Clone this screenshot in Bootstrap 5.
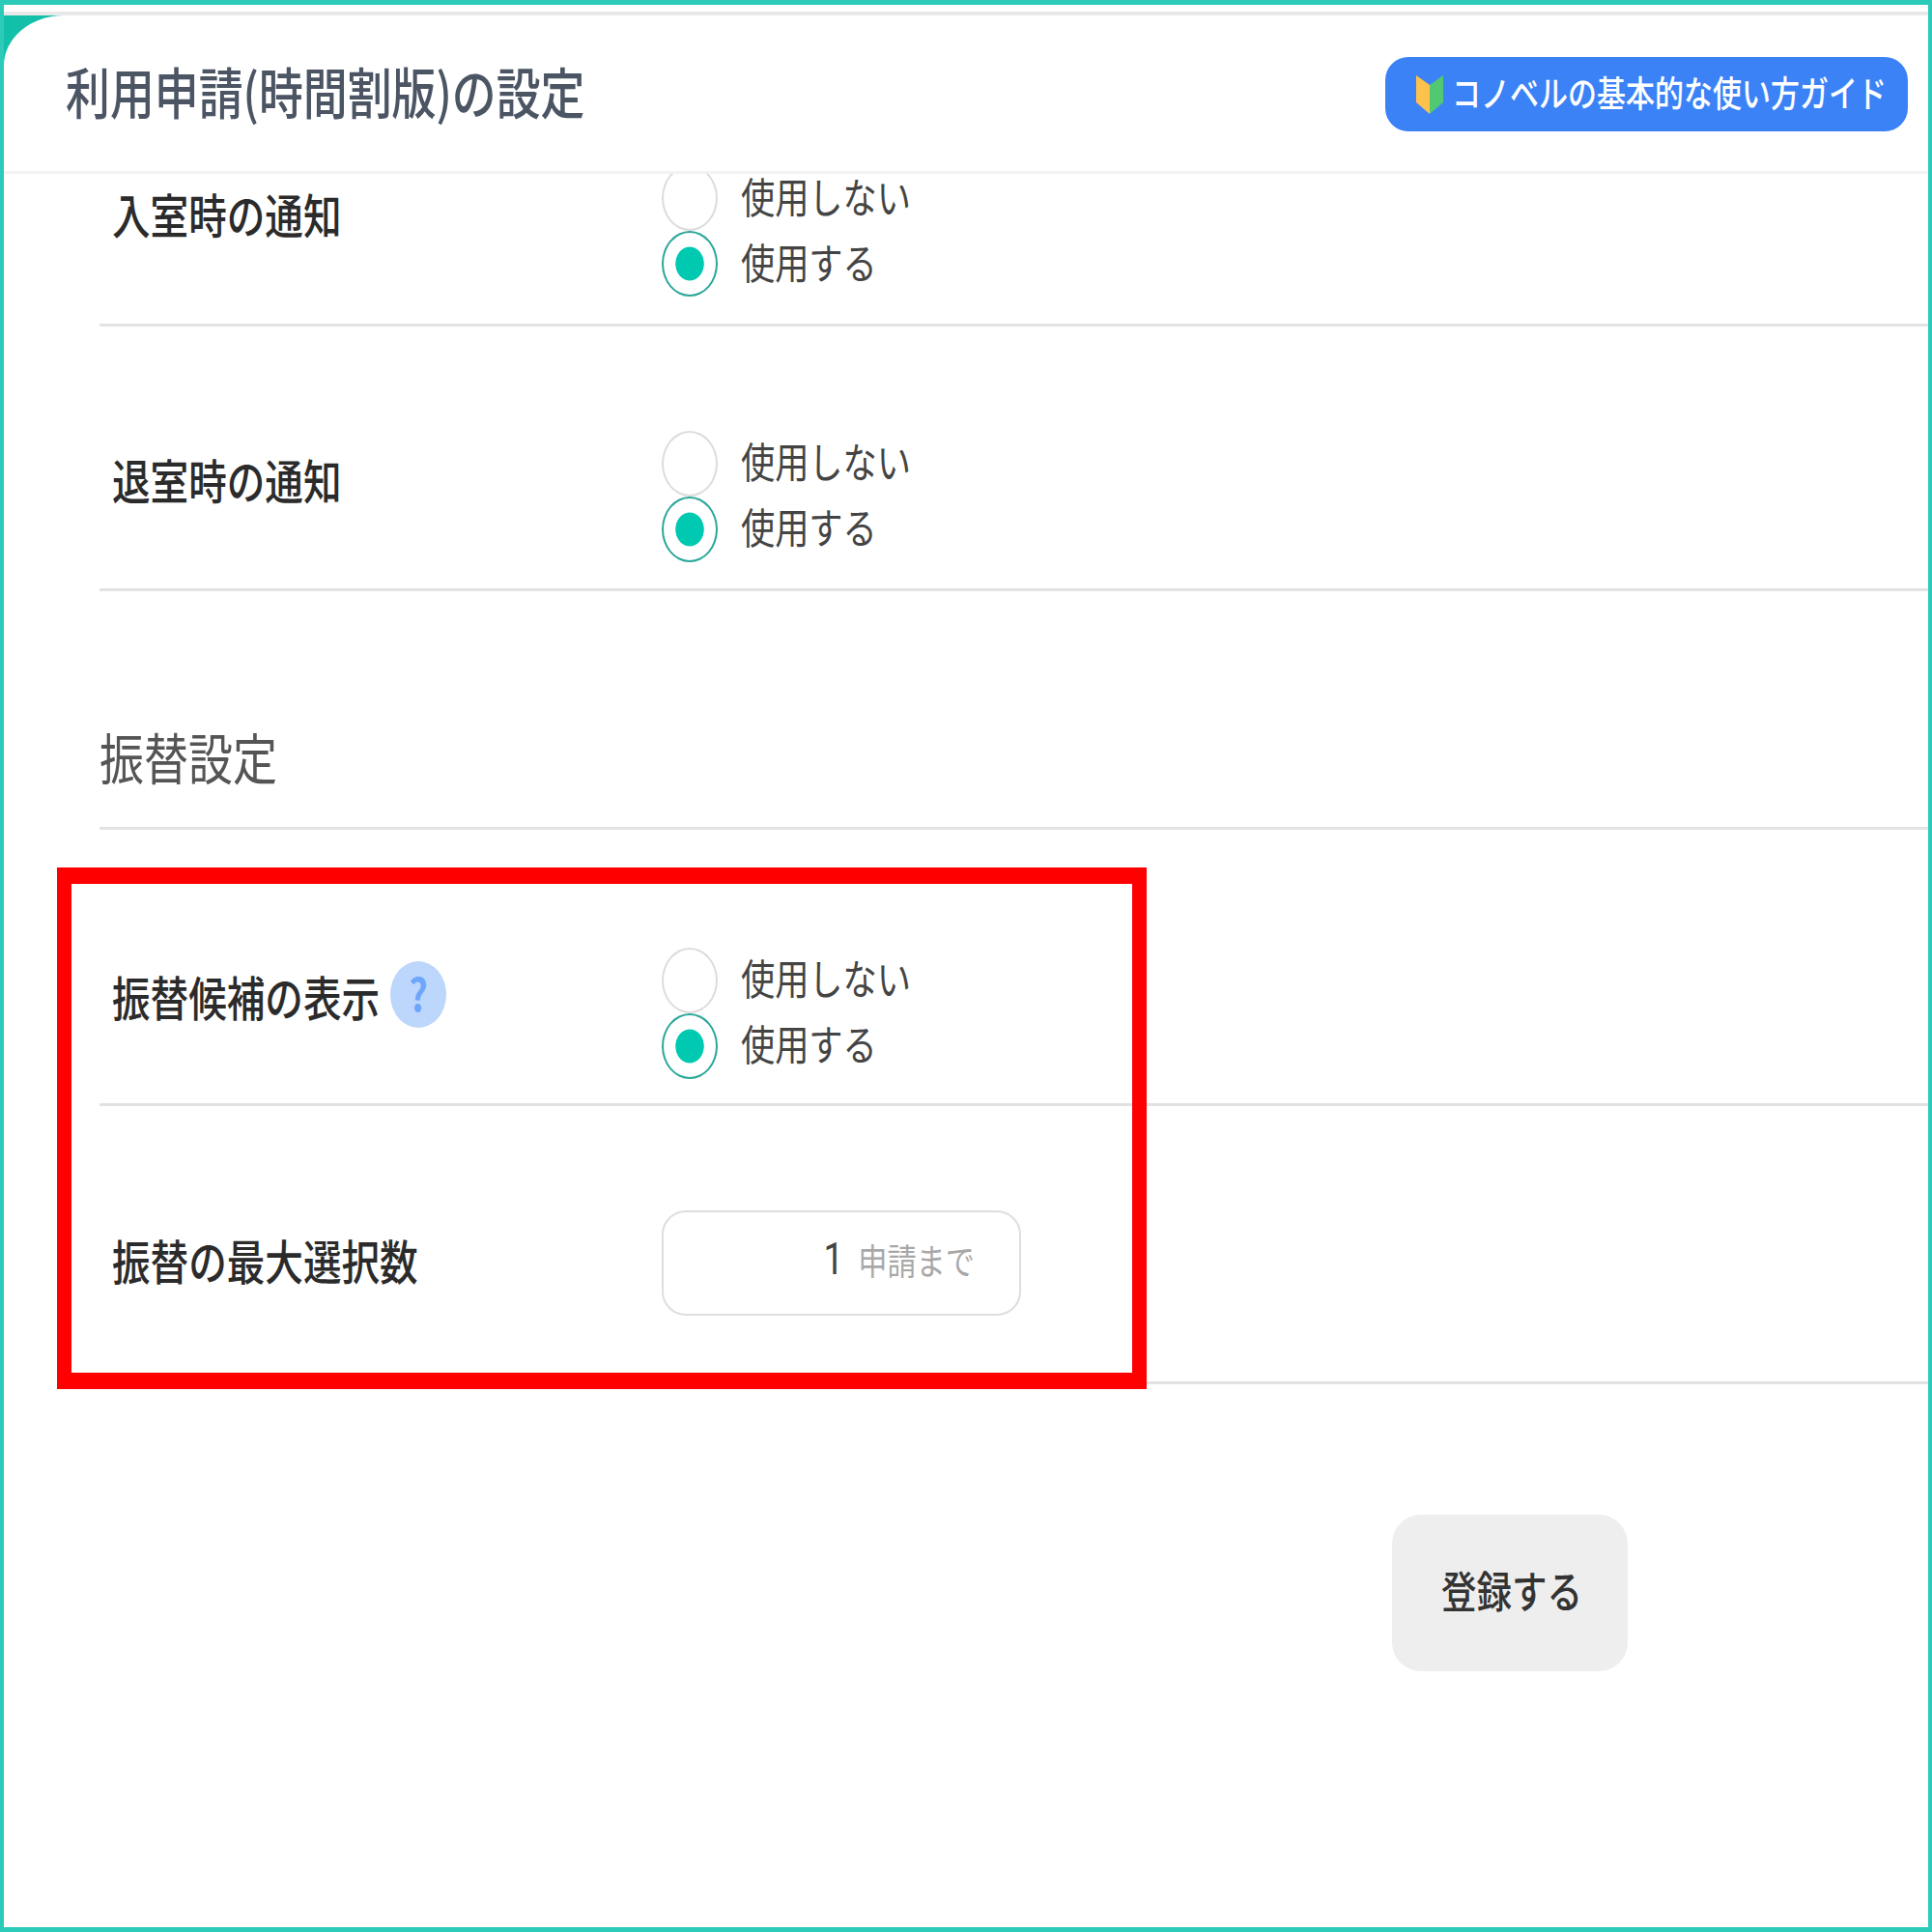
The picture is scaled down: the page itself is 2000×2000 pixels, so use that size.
<!DOCTYPE html>
<html lang="ja">
<head>
<meta charset="utf-8">
<title>利用申請(時間割版)の設定</title>
<link rel="stylesheet" href="https://cdn.jsdelivr.net/npm/bootstrap@5.3.0/dist/css/bootstrap.min.css">
<style>
body{font-family:"Noto Sans CJK JP","Liberation Sans",sans-serif;color:#333;background:#fff}
.shell{height:2000px;width:2000px;border:solid #2ccbb9;border-width:5px 4px;overflow:hidden;position:relative;background:#fff}
.tall{display:inline-block;transform:translateY(-3px) scaleY(1.24);line-height:1.2;white-space:nowrap}
.topwrap{margin-top:7px;border-top:4px solid #e8e8e8;background:linear-gradient(135deg,#12bfa9,#2ccbb9 60%);position:relative;z-index:2}
.topbar{height:164px;padding:0 21px 0 64px;background:#fff;border-top-left-radius:62px 52px;border-bottom:3px solid #f3f3f3}
.page-title{font-size:45.9px;font-weight:500;color:#4b5563}
.guide{height:77px;width:541px;margin-top:2px;padding:0 0 0 32px;border-radius:24px;background:#3b82f6;border:0;color:#fff;font-size:30px;font-weight:500;gap:9px}
.guide:hover{background:#3b82f6;color:#fff}
.rows{margin-top:-6px;margin-left:99px}
.setrow{padding-left:13px;border-bottom:3px solid #e2e2e2}
.r1{height:164px;padding-bottom:31px}
.r2{height:274px;padding-top:106px;padding-bottom:26px}
.r3{height:286px;padding-top:120px;padding-bottom:24px}
.r4{height:288px;padding-top:107px;padding-bottom:68px}
.sethead{height:247px;padding-bottom:43px;font-size:46px;font-weight:400;color:#555;border-bottom:3px solid #e2e2e2}
.labcol{width:569px;flex:none;font-size:39.6px;font-weight:500;color:#2b2b2b}
.lift{padding-bottom:30px}
.rad-line{height:68px;gap:24px;font-size:35.2px;font-weight:400;color:#444}
.form-check-input.rad{width:58px;height:68px;margin:0;flex:none;border:2px solid #dcdcdc;background-color:#fff}
.form-check-input.rad:checked{border-color:#2aa79a;background-color:#fff;background-image:radial-gradient(ellipse closest-side,#00c9b1 0,#00c9b1 53%,#fff 56%)}
.helpdot{width:58px;height:69px;border-radius:50%;background:#bcd7fb;color:#6ea6fb;font-size:38px;font-weight:700;margin-left:11px;margin-bottom:8px}
.qty{width:372px;height:109px;border:2px solid #dedede;border-radius:25px;padding-right:46px;gap:15px;background:#fff}
.qty-in{flex:1 1 auto;min-width:0;border:0;background:transparent;padding:0;text-align:right;font-family:Roboto,sans-serif;font-size:37px;color:#444;box-shadow:none;transform:translateY(-3px) scaleY(1.24)}
.qty-unit{font-size:30.2px;color:#a8a8a8}
.savebar{margin-top:135px;margin-left:1437px}
.savebtn{width:244px;height:162px;border-radius:30px;background:#eee;border:0;color:#333;font-size:36.5px;font-weight:500;padding:0 0 0 4px}
.savebtn:hover{background:#eee;color:#333}
.markup{position:absolute;left:55px;top:893px;width:1128px;height:540px;border:solid #ff0000;border-width:17px 15px;pointer-events:none;z-index:3}
</style>
</head>
<body class="m-0">
<div class="shell">
  <div class="topwrap">
    <header class="topbar d-flex align-items-center justify-content-between">
      <h1 class="page-title m-0"><span class="tall">利用申請(時間割版)の設定</span></h1>
      <a class="btn guide d-flex align-items-center" href="#">
        <svg width="28" height="40" viewBox="0 0 28 40" aria-hidden="true"><path d="M0 0 14 10V40L0 28Z" fill="#fcc24c"/><path d="M28 0 14 10V40L28 28Z" fill="#53c872"/></svg>
        <span class="tall">コノベルの基本的な使い方ガイド</span>
      </a>
    </header>
  </div>
  <div class="rows">
    <div class="setrow r1 d-flex align-items-center">
      <div class="labcol lift"><span class="tall">入室時の通知</span></div>
      <div>
        <label class="rad-line d-flex align-items-center"><input class="form-check-input rad" type="radio" name="a"><span class="tall">使用しない</span></label>
        <label class="rad-line d-flex align-items-center"><input class="form-check-input rad" type="radio" name="a" checked><span class="tall">使用する</span></label>
      </div>
    </div>
    <div class="setrow r2 d-flex align-items-center">
      <div class="labcol lift"><span class="tall">退室時の通知</span></div>
      <div>
        <label class="rad-line d-flex align-items-center"><input class="form-check-input rad" type="radio" name="b"><span class="tall">使用しない</span></label>
        <label class="rad-line d-flex align-items-center"><input class="form-check-input rad" type="radio" name="b" checked><span class="tall">使用する</span></label>
      </div>
    </div>
    <div class="sethead d-flex align-items-end"><span class="tall">振替設定</span></div>
    <div class="setrow r3 d-flex align-items-center">
      <div class="labcol lift d-flex align-items-center"><span class="tall">振替候補の表示</span><span class="helpdot d-inline-flex align-items-center justify-content-center"><span class="tall">?</span></span></div>
      <div>
        <label class="rad-line d-flex align-items-center"><input class="form-check-input rad" type="radio" name="c"><span class="tall">使用しない</span></label>
        <label class="rad-line d-flex align-items-center"><input class="form-check-input rad" type="radio" name="c" checked><span class="tall">使用する</span></label>
      </div>
    </div>
    <div class="setrow r4 d-flex align-items-center">
      <div class="labcol"><span class="tall">振替の最大選択数</span></div>
      <div class="qty d-flex align-items-center">
        <input class="qty-in" type="text" value="1" aria-label="振替の最大選択数">
        <span class="qty-unit tall">申請まで</span>
      </div>
    </div>
  </div>
  <div class="savebar">
    <button class="btn savebtn" type="button"><span class="tall">登録する</span></button>
  </div>
  <div class="markup"></div>
</div>
<script src="https://cdn.jsdelivr.net/npm/bootstrap@5.3.0/dist/js/bootstrap.bundle.min.js"></script>
</body>
</html>
